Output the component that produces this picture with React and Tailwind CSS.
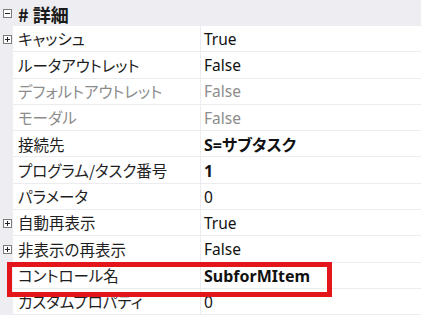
import React from "react";

const BoxIcon = ({ plus }) => (
  <svg width="9" height="9" viewBox="0 0 9 9" className="block">
    <rect x="0.5" y="0.5" width="8" height="8" fill="#ffffff" stroke="#7a7a7a" />
    <line x1="2" y1="4.5" x2="7" y2="4.5" stroke="#222" />
    {plus && <line x1="4.5" y1="2" x2="4.5" y2="7" stroke="#222" />}
  </svg>
);

const rows = [
  { label: "キャッシュ", value: "True", icon: true },
  { label: "ルータアウトレット", value: "False" },
  { label: "デフォルトアウトレット", value: "False", dim: true },
  { label: "モーダル", value: "False", dim: true },
  { label: "接続先", value: "S=サブタスク", bold: true },
  { label: "プログラム/タスク番号", value: "1", bold: true },
  { label: "パラメータ", value: "0" },
  { label: "自動再表示", value: "True", icon: true },
  { label: "非表示の再表示", value: "False", icon: true },
  { label: "コントロール名", value: "SubforMItem", bold: true },
  { label: "カスタムプロパティ", value: "0" },
];

export default function App() {
  return (
    <div
      className="relative w-[421px] h-[315px] overflow-hidden bg-[#eeeef2] flex flex-col"
      style={{ fontFamily: "'Noto Sans CJK JP', 'Noto Sans', sans-serif", fontFeatureSettings: '"palt"' }}
    >
      <div className="h-[26px] shrink-0 flex items-center">
        <div className="w-[13px] flex justify-center pl-[1px]">
          <BoxIcon />
        </div>
        <span className="ml-[5px] text-[18px] font-bold text-[#1a1a1a] leading-none pt-[1px]">
          # 詳細
        </span>
      </div>
      {rows.map((r, i) => (
        <div key={i} className="h-[26.3px] shrink-0 flex">
          <div className="w-[13px] shrink-0 flex justify-center items-center pl-[1px]">
            {r.icon && <BoxIcon plus />}
          </div>
          <div
            className={`w-[188px] shrink-0 bg-white border-b border-r border-[#ececf0] flex items-center pl-[5px] pt-[1px] text-[15.5px] leading-none whitespace-nowrap ${
              r.dim ? "text-[#8c8c8c]" : "text-[#1e1e1e]"
            }`}
          >
            {r.label}
          </div>
          <div
            className={`flex-1 bg-white border-b border-[#ececf0] flex items-center pl-[3px] pt-[2px] leading-none whitespace-nowrap ${
              r.dim ? "text-[#8c8c8c]" : "text-[#111111]"
            } ${r.bold ? "font-bold text-[16px]" : "text-[15.5px]"}`}
            style={{ fontFamily: "'Noto Sans', 'Noto Sans CJK JP', sans-serif" }}
          >
            {r.value}
          </div>
        </div>
      ))}
      <div className="absolute left-[7px] top-[262px] w-[325px] h-[35px] border-[5px] border-[#e2161b] pointer-events-none" />
    </div>
  );
}
